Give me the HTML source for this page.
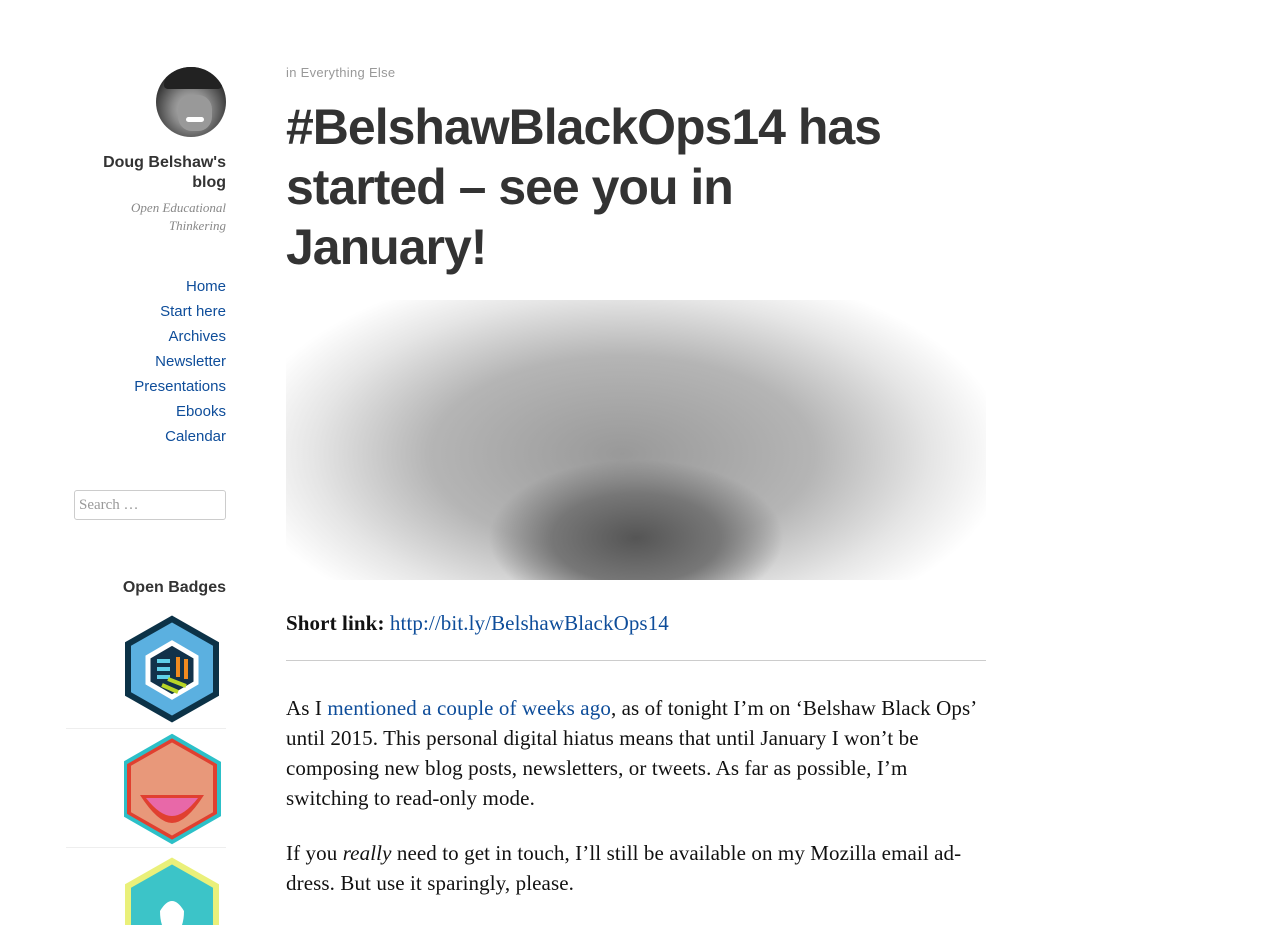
<!DOCTYPE html>
<html><head><meta charset="utf-8"><style>
body{margin:0;background:#fff;width:1274px;height:919px;overflow:hidden;position:relative;font-family:"Liberation Sans",sans-serif}
a{color:#0e4d9a;text-decoration:none}
.side{position:absolute;right:calc(1274px - 226px);text-align:right}
.nav a{display:block;font-size:15px;line-height:25px}
.hr{position:absolute;left:66px;width:160px;height:1px;background:#eee}
.body p{margin:0 0 25px;font-family:"Liberation Serif",serif;font-size:21px;line-height:30px;color:#111;letter-spacing:0.1px}
</style></head><body>
<div style="position:absolute;left:156px;top:67px;width:70px;height:70px;border-radius:50%;background:radial-gradient(circle at 50% 60%,#c8c8c8 0,#888 35%,#333 70%,#111 100%);overflow:hidden">
<div style="position:absolute;left:8px;top:0;width:58px;height:22px;background:#222;border-radius:30px 30px 6px 6px"></div>
<div style="position:absolute;left:22px;top:28px;width:34px;height:36px;background:#999;border-radius:40%"></div>
<div style="position:absolute;left:30px;top:50px;width:18px;height:5px;background:#fff;border-radius:3px"></div></div>
<div class="side" style="top:153px;font-size:16px;font-weight:bold;color:#333;line-height:20px">Doug Belshaw's<br>blog</div>
<div class="side" style="top:199px;font-family:'Liberation Serif',serif;font-style:italic;font-size:13px;line-height:18px;color:#888">Open Educational<br>Thinkering</div>
<div class="side nav" style="top:274px"><a>Home</a><a>Start here</a><a>Archives</a><a>Newsletter</a><a>Presentations</a><a>Ebooks</a><a>Calendar</a></div>
<div style="position:absolute;left:74px;top:490px;height:30px;border:1px solid #ccc;border-radius:3px;font-family:'Liberation Serif',serif;font-size:15px;color:#999;line-height:28px;padding-left:4px;box-sizing:border-box;width:152px">Search …</div>
<div class="side" style="top:579px;font-size:16px;font-weight:bold;color:#333">Open Badges</div>
<svg style="position:absolute;left:124px;top:615px" width="100" height="310">
<polygon points="48,4 92,29 92,79 48,104 4,79 4,29" fill="#5bb0e0" stroke="#0c3247" stroke-width="6"/>
<polygon points="48,28 72,42 72,68 48,82 24,68 24,42" fill="#12324a" stroke="#fff" stroke-width="5"/>
<path d="M33 46h13M33 54h13M33 62h13" stroke="#5fd0e8" stroke-width="4"/><path d="M54 42v20M62 44v20" stroke="#f08a20" stroke-width="4"/><path d="M38 70l16 7M44 64l18 7" stroke="#b8d628" stroke-width="4"/>
<polygon points="48,124 92,149 92,199 48,224 4,199 4,149" fill="#e8987a" stroke="#e04030" stroke-width="6"/>
<polygon points="48,121 95,148 95,200 48,227 1,200 1,148" fill="none" stroke="#2cc0c8" stroke-width="4"/>
<path d="M16 180h64q-18 28-32 28q-14 0-32-28z" fill="#e04030"/><path d="M22 183h52q-14 18-26 18q-12 0-26-18z" fill="#e868a8"/>
<polygon points="48,246 92,271 92,321 48,346 4,321 4,271" fill="#3cc4c8" stroke="#eaf07a" stroke-width="6"/>
<path d="M36 296q12-20 24 0q0 20-12 26q-12-6-12-26z" fill="#fff"/></svg>
<div class="hr" style="top:728px"></div><div class="hr" style="top:847px"></div>
<div style="position:absolute;left:286px;top:65px;font-size:13px;color:#999;letter-spacing:.3px">in Everything Else</div>
<div style="position:absolute;left:286px;top:97px;width:620px;font-size:50px;font-weight:bold;line-height:60px;color:#333;letter-spacing:-1px">#BelshawBlackOps14 has started – see you in January!</div>
<div style="position:absolute;left:286px;top:300px;width:700px;height:280px;background:radial-gradient(ellipse 30% 40% at 50% 85%,#555 0,#777 40%,transparent 70%),radial-gradient(ellipse 55% 70% at 48% 55%,#999 0,#b5b5b5 50%,#e5e5e5 80%,#fff 100%)"></div>
<div class="body" style="position:absolute;left:286px;top:608px;width:700px">
<p><b>Short link:</b> <a>http://bit.ly/BelshawBlackOps14</a></p>
<div style="height:1px;background:#ccc;margin:-3px 0 32px"></div>
<p>As I <a>mentioned a couple of weeks ago</a>, as of tonight I’m on ‘Belshaw Black Ops’ until 2015. This personal digital hiatus means that until January I won’t be composing new blog posts, newsletters, or tweets. As far as possible, I’m switching to read-only mode.</p>
<p>If you <i>really</i> need to get in touch, I’ll still be available on my Mozilla email ad­dress. But use it sparingly, please.</p>
</div>
</body></html>
